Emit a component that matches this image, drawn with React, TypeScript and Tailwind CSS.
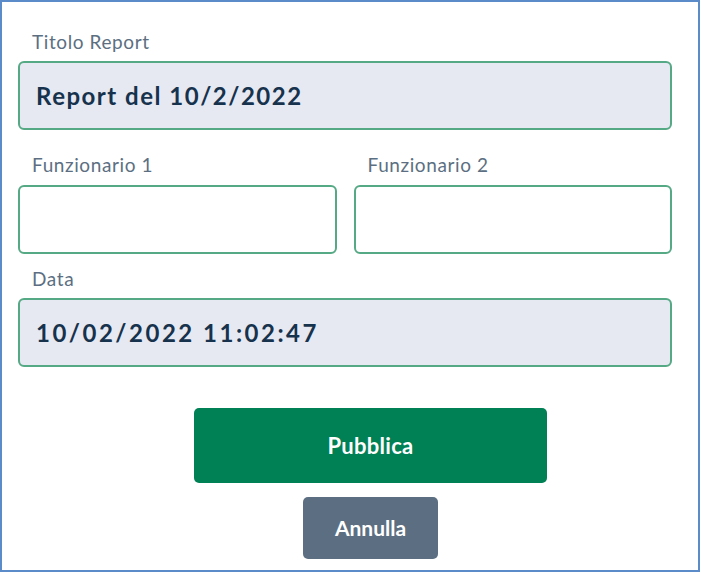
import React from "react";

const Label = ({ children }: { children: React.ReactNode }) => (
  <label className="block pl-[14px] text-[19px] leading-[22px] tracking-[0.6px] text-[#5c6f82]">{children}</label>
);

const Field = ({ value, wide }: { value?: string; wide?: boolean }) => (
  <div
    className={`flex h-[69px] items-center rounded-[6px] border-2 border-[#55a985] px-4 text-[24px] font-bold text-[#17324d] ${
      value !== undefined ? "bg-[#e6e9f2]" : "bg-white"
    } ${wide ? "tracking-[2.5px]" : "tracking-[1.5px]"}`}
  >
    {value}
  </div>
);

export default function App() {
  return (
    <div
      className="h-[573px] w-[701px] bg-white"
      style={{ fontFamily: "Lato, 'Open Sans', sans-serif" }}
    >
      <div className="flex h-[572px] w-[700px] flex-col border-2 border-[#5b8bc9] pl-4 pr-[26px] pt-[29px]">
        <Label>Titolo Report</Label>
        <div className="mt-[8px]">
          <Field value="Report del 10/2/2022" />
        </div>

        <div className="mt-[24px] grid grid-cols-2 gap-[17px]">
          <div>
            <Label>Funzionario 1</Label>
            <div className="mt-[9px]">
              <Field />
            </div>
          </div>
          <div>
            <Label>Funzionario 2</Label>
            <div className="mt-[9px]">
              <Field />
            </div>
          </div>
        </div>

        <div className="mt-[14px]">
          <Label>Data</Label>
          <div className="mt-[8px]">
            <Field value="10/02/2022 11:02:47" wide />
          </div>
        </div>

        <div className="ml-[176px] mt-[41px] flex w-[353px] flex-col items-center gap-[14px]">
          <button className="h-[75px] w-full rounded-[5px] bg-[#008055] text-[22px] font-bold tracking-[0.3px] text-white">
            Pubblica
          </button>
          <button className="h-[62px] w-[135px] rounded-[5px] bg-[#5c6f82] text-[21px] font-bold text-white">
            Annulla
          </button>
        </div>
      </div>
    </div>
  );
}
